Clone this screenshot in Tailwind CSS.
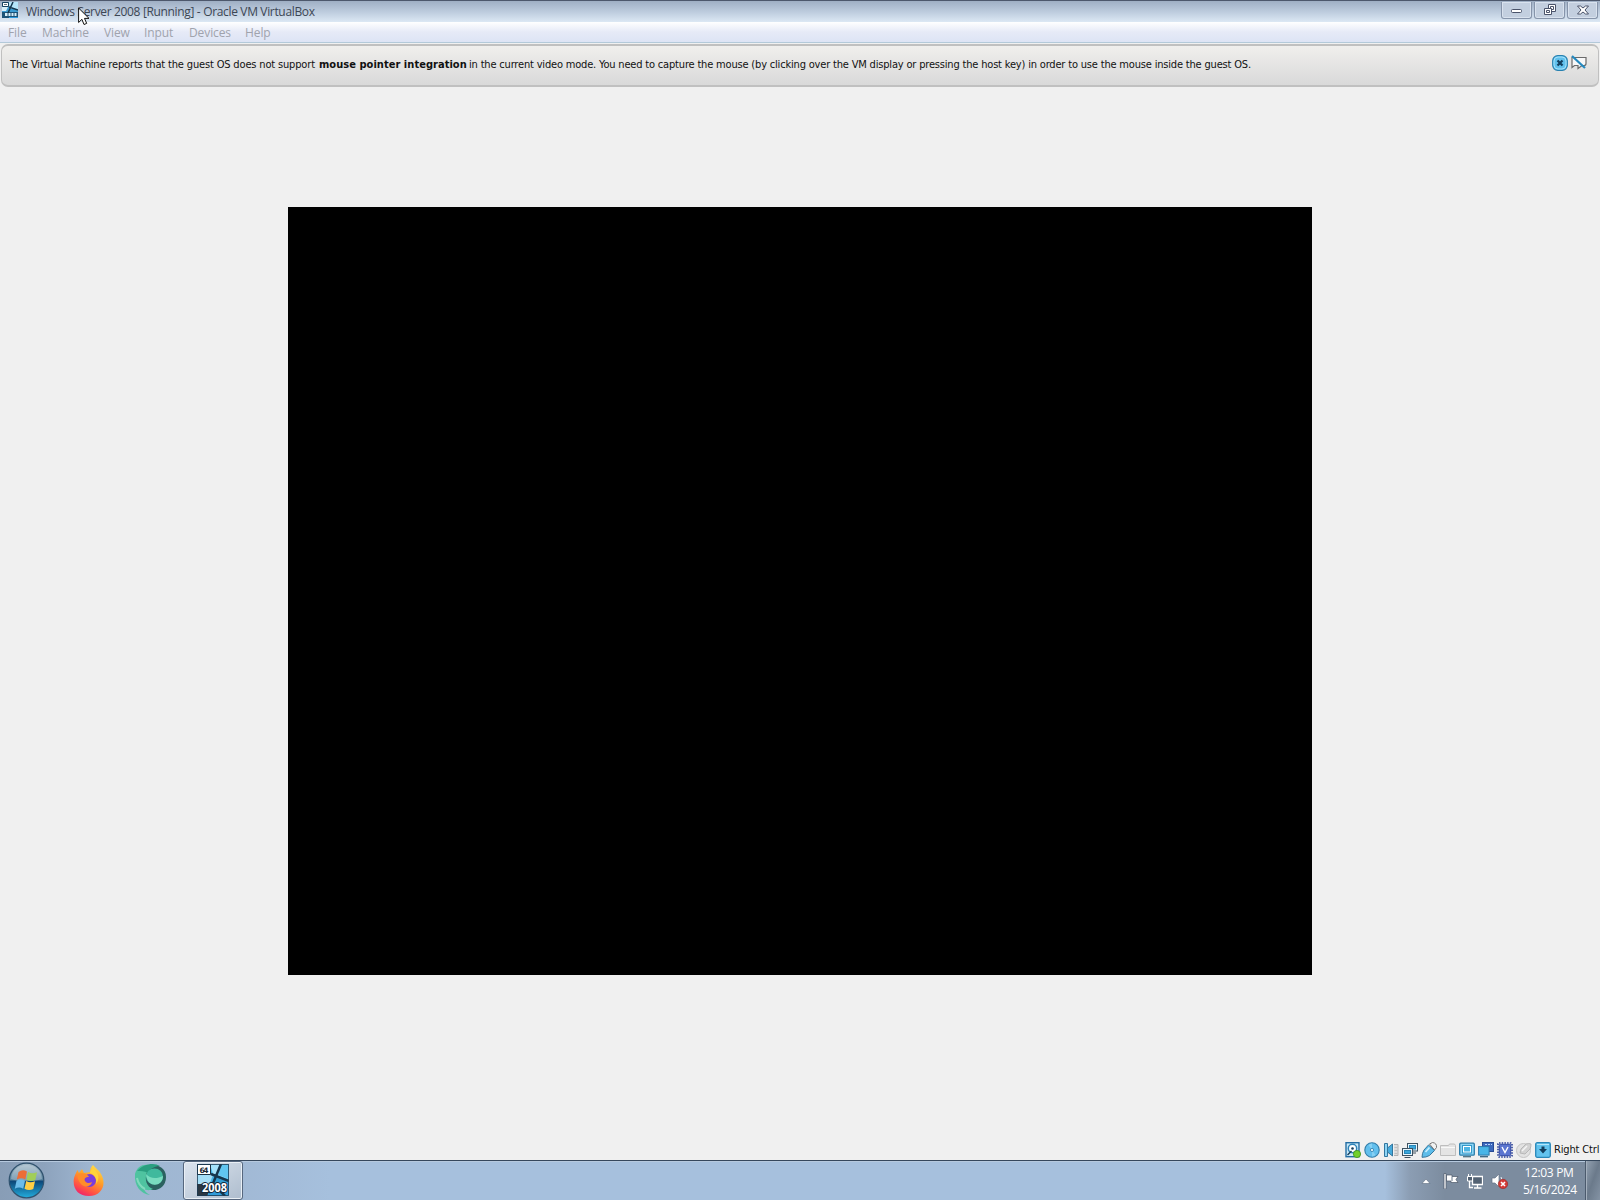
<!DOCTYPE html>
<html lang="en">
<head>
    <meta charset="UTF-8">
    <meta name="viewport" content="width=device-width, initial-scale=1.0">
    <title>Windows Server 2008 [Running] - Oracle VM VirtualBox</title>
    <script src="https://cdn.jsdelivr.net/npm/@tailwindcss/browser@4"></script>
</head>
<body class="bg-[#f0f0f0] overflow-hidden">
    <div class="relative flex h-[1200px] w-[1600px] flex-col overflow-hidden font-['Open_Sans','Noto_Sans',sans-serif]">

        <!-- Title bar -->
        <header class="flex h-[22px] shrink-0 items-start border-t border-[#4d586c] bg-linear-to-b from-[#9fafc4] via-[#bccbdd] to-[#dce8f4] pl-[2px] pr-[2px]">
            <svg class="mt-px h-4 w-4 shrink-0" viewBox="0 0 16 16">
                <rect width="16" height="16" fill="#3b9bd2"/>
                <path d="M7 0h9v8L7 6z" fill="#b5e6fa"/>
                <path d="M0 5h6l-2 4H0z" fill="#d7effa"/>
                <path d="M0 10h16v6H0z" fill="#1c5277"/>
                <path d="M11 0 6 11M7 5l9 3" stroke="#14354c" stroke-width="1.500"/>
                <path d="M.5.500h6v4h-6z" fill="#fff" stroke="#17415f"/>
                <path d="M2 2.500h3" stroke="#5d7280"/>
                <path d="M3 12.500h2.500m1 0h2m1 0h2m1 0h2" stroke="#d7eefa" stroke-width="3"/>
                <path d="M7 15.500h9" stroke="#2b9be0"/>
            </svg>
            <h1 class="ml-[8px] h-4 grow whitespace-nowrap pt-[2px] text-[12px] leading-[17px] tracking-[-0.34px] text-[#3c4654]">Windows Server 2008 [Running] - Oracle VM VirtualBox</h1>
            <div class="flex gap-[2px] pt-px">
                <button class="flex h-[17px] w-[31px] items-center justify-center rounded-b-[3px] border border-t-0 border-[#8694aa] bg-[#c3cfdf] shadow-[inset_0_0_0_1px_#d9e2ee]">
                    <svg class="h-[12px] w-[14px]" viewBox="0 0 14 12"><rect x="1.5" y="5.5" width="10" height="3" rx="1" fill="#fff" stroke="#4a536a"/></svg>
                </button>
                <button class="flex h-[17px] w-[31px] items-center justify-center rounded-b-[3px] border border-t-0 border-[#8694aa] bg-[#c3cfdf] shadow-[inset_0_0_0_1px_#d9e2ee]">
                    <svg class="h-[12px] w-[14px]" viewBox="0 0 14 12" fill="#fff" stroke="#4a536a"><path d="M5.500.5h7v7h-7z"/><path d="M7.500 2.500h3v3h-3z"/><path d="M1.500 4.500h7v6h-7z"/><path d="M3.500 6.500h3v2h-3z"/></svg>
                </button>
                <button class="flex h-[17px] w-[31px] items-center justify-center rounded-b-[3px] border border-t-0 border-[#8694aa] bg-[#c3cfdf] shadow-[inset_0_0_0_1px_#d9e2ee]">
                    <svg class="h-[12px] w-[14px]" viewBox="0 0 14 12"><path d="M1.500 2h3L7 4l2.500-2h3L9 6l3.500 4h-3L7 8l-2.500 2h-3L5 6z" fill="#fff" stroke="#4a536a"/></svg>
                </button>
            </div>
        </header>

        <!-- Menu bar -->
        <nav class="flex h-[21px] shrink-0 border-b border-[#b3c9d9] bg-linear-to-b from-white via-[#e6eaf7] to-[#dde4f5] pl-2 text-[12px] leading-[22px] tracking-[-0.1px] text-[#a0a3ad]">
            <span class="w-[34px]">File</span>
            <span class="w-[62px]">Machine</span>
            <span class="w-[40px]">View</span>
            <span class="w-[45px]">Input</span>
            <span class="w-[56px]">Devices</span>
            <span>Help</span>
        </nav>

        <!-- Message panel -->
        <section class="mx-px mt-px flex h-[43px] shrink-0 items-start rounded-[7px] border-x border-y-2 border-[#c0c0c0] bg-linear-to-b from-[#f0efed] to-[#d9d9d9] pl-[8px] pr-[11px] font-['DejaVu_Sans_Condensed','DejaVu_Sans',sans-serif]">
            <p class="flex grow whitespace-pre pt-[11px] text-[11px] leading-[16px] text-[#111]"><span class="w-[309px] tracking-[-0.16px]">The Virtual Machine reports that the guest OS does not support </span><b class="w-[150px] tracking-[0.04px]">mouse pointer integration</b><span class="tracking-[-0.18px]">in the current video mode. You need to capture the mouse (by clicking over the VM display or pressing the host key) in order to use the mouse inside the guest OS.</span></p>
            <div class="flex gap-[3px] pt-[9px]">
                <svg class="h-4 w-4" viewBox="0 0 16 16">
                    <rect x=".7" y=".7" width="14.600" height="14.600" rx="5" fill="#61c1ed" stroke="#2781b0" stroke-width="1.200"/>
                    <rect x="2" y="2" width="12" height="12" rx="4" fill="none" stroke="#a6e1fa"/>
                    <path d="m5.500 5.500 5 5m0-5-5 5" stroke="#123f5f" stroke-width="2.200"/>
                </svg>
                <svg class="h-4 w-4" viewBox="0 0 16 16">
                    <path d="M1 2.500h14v6q0 2-2 2h-2l-4 3v-3H3.500L1 12.500z" fill="#f8f8f8" stroke="#6b6b6b" stroke-width="1.200"/>
                    <path d="m1 1 13 12" stroke="#2489bf" stroke-width="2.200"/>
                </svg>
            </div>
        </section>

        <!-- Guest display -->
        <main class="flex h-[1051px] shrink-0 justify-center pt-[120px]">
            <div class="h-[768px] w-[1024px] bg-black"></div>
        </main>

        <!-- VM status bar -->
        <div class="flex h-[22px] shrink-0 items-center justify-end gap-[3px] pr-px pt-px">
            <svg class="h-4 w-4" viewBox="0 0 16 16">
                <rect x="1" y=".7" width="13" height="14" fill="#c9e9f8" stroke="#246da3" stroke-width="1.400"/>
                <circle cx="7.500" cy="6.500" r="4.200" fill="#fff" stroke="#2e83b8" stroke-width="1.500"/>
                <circle cx="7.500" cy="6.500" r="1.300" fill="#173e5c"/>
                <path d="m2.500 13 4-4" stroke="#173e5c" stroke-width="1.500"/>
                <circle cx="12" cy="12" r="3.600" fill="#72cf2b" stroke="#3f9319" stroke-width=".8"/>
            </svg>
            <svg class="h-4 w-4" viewBox="0 0 16 16">
                <circle cx="8" cy="8" r="7.200" fill="#62bfed" stroke="#317da9" stroke-width="1.100"/>
                <path d="M8 8 4.500 3A7 7 0 0 1 8 1.500zM8 8l3.500 5A7 7 0 0 1 8 14.500z" fill="#86d0f3"/>
                <circle cx="8" cy="8" r="1.600" fill="#e3f6ff" stroke="#317da9" stroke-width=".8"/>
            </svg>
            <svg class="h-4 w-4" viewBox="0 0 16 16">
                <path d="M1.500 1.500h3v13h-3z" fill="#8ed4f4" stroke="#32769e"/>
                <path d="M4.500 6 9.500 2v12l-5-4z" fill="#46abdc" stroke="#32769e"/>
                <path d="M11 2.500h4v11h-4" fill="#ddd" stroke="#b3b3b3"/>
                <path d="M11.500 5.500h3m-3 3h3m-3 3h3" stroke="#c0c0c0"/>
            </svg>
            <svg class="h-4 w-4" viewBox="0 0 16 16" stroke="#3f5261">
                <rect x="5.500" y="1.500" width="10" height="7.500" fill="#e8f6fd"/><rect x="7.500" y="3.500" width="6" height="3.500" fill="#3ba7dc" stroke="#2786b8"/>
                <path d="M8 11h6"/>
                <rect x=".5" y="6.500" width="10" height="7" fill="#e8f6fd"/><rect x="2.500" y="8.500" width="6" height="3" fill="#3ba7dc" stroke="#2786b8"/>
                <path d="M2.500 15.500h6"/>
            </svg>
            <svg class="h-4 w-4" viewBox="0 0 16 16">
                <path d="m8.500 2 3-1.500Q16 1 15.500 5.500l-2 2.500z" fill="#f2f2f2" stroke="#777"/>
                <path d="M7.500 3 13.500 8.500l-5 5Q5 15.500 1 15.300q0-4 2-7.300z" fill="#5dbdea" stroke="#36769b"/>
                <path d="m4.500 10 4-4.500" stroke="#c8effe" stroke-width="1.700"/>
            </svg>
            <svg class="h-4 w-4" viewBox="0 0 16 16"><path d="M.5 3.500h8l1-1.500h5l1 1.500v10H.5z" fill="#e4e4e4" stroke="#bebebe"/><path d="M1 5.500h14" stroke="#f8f8f8"/></svg>
            <svg class="h-4 w-4" viewBox="0 0 16 16">
                <rect x=".7" y="1.200" width="14.600" height="12" rx="1" fill="#8bd5f6" stroke="#2b7daa" stroke-width="1.300"/>
                <rect x="3.500" y="3.500" width="9" height="7.500" fill="#fff" stroke="#3499c9"/><path d="M5 5h6v4.500H5z" fill="#4db5e4"/>
                <path d="M4 14.700h8" stroke="#4f6f80" stroke-width="1.300"/>
            </svg>
            <svg class="h-4 w-4" viewBox="0 0 16 16">
                <rect x="4.500" y=".5" width="11" height="9" fill="#3c68bd" stroke="#294b95"/>
                <path d="M7 2.500h2m1 0h2m1 0h1" stroke="#b9d5fa"/>
                <rect x=".6" y="4.600" width="10.500" height="8.500" fill="#48b5e7" stroke="#2b79ab"/>
                <path d="M2 14.700h8" stroke="#36637f" stroke-width="1.300"/>
            </svg>
            <svg class="h-4 w-4" viewBox="0 0 16 16">
                <rect x="1" y="1" width="14" height="14" rx="1" fill="none" stroke="#293e96" stroke-width="1.600" stroke-dasharray="1.500 1.200"/>
                <rect x="2.300" y="2.300" width="11.400" height="11.400" rx="1" fill="#5b75d0" stroke="#334aa4"/>
                <path d="m5 5 3 5.500L11 5" fill="none" stroke="#fff" stroke-width="1.400"/>
            </svg>
            <svg class="h-4 w-4" viewBox="0 0 16 16">
                <circle cx="7.500" cy="8.500" r="7" fill="#e2e2e2" stroke="#c4c4c4"/>
                <path d="m4 11 1-4 5-5q3-1 5 0 0 3-1 5l-5 5z" fill="#d2d2d2" stroke="#b7b7b7"/><path d="m6 9 5-5" stroke="#f5f5f5" stroke-width="1.500"/>
            </svg>
            <svg class="h-4 w-4" viewBox="0 0 16 16">
                <rect x=".7" y=".7" width="14.600" height="14.600" rx="1.500" fill="#62c3ee" stroke="#2987b8" stroke-width="1.300"/>
                <path d="M2 2.500h12" stroke="#b3e6fb"/>
                <path d="M6.500 4.500h3V7H12l-4 4.500L4 7h2.500z" fill="#12405f"/>
            </svg>
            <span class="w-[45px] whitespace-nowrap pt-[2px] font-['DejaVu_Sans_Condensed','DejaVu_Sans',sans-serif] text-[11px] tracking-[-0.15px] text-[#111]">Right Ctrl</span>
        </div>

        <!-- Taskbar -->
        <footer class="flex h-[40px] shrink-0 items-stretch border-t border-[#35475c] bg-[linear-gradient(90deg,#889db6_0px,#8da3bd_45px,#9eb5d0_90px,#a1b9d5_240px,#a6c0dd_330px,#a6c0dd_1385px,#8b9db3_1410px,#7c8c9f_1445px,#7c8c9f_1600px)] shadow-[inset_0_1px_0_#b6c9de]">
            <div class="flex w-[183px] items-center">
                <svg class="ml-2 h-[37px] w-[37px]" viewBox="0 0 37 37">
                    <defs>
                        <linearGradient id="orb" x2="0" y2="1"><stop stop-color="#a9bdca"/><stop offset=".48" stop-color="#56809b"/><stop offset=".52" stop-color="#0c4678"/><stop offset="1" stop-color="#23aede"/></linearGradient>
                    </defs>
                    <circle cx="18.500" cy="18.500" r="17.300" fill="url(#orb)" stroke="#31536f" stroke-width="1.200"/>
                    <path d="M3 17C4 8 10 3 18.500 3S33 8 34 17c-8 3-23 3-31 0" fill="#e4f0f6" fill-opacity=".3"/>
                    <path d="M10.500 10q4-3 8.500-.5l-1.700 8q-4-2.500-8.500 0z" fill="#ec6d37"/>
                    <path d="M20 10q4 2.500 9 .2L27.300 18q-4.300 2.300-8.800-.2z" fill="#a1ce59"/>
                    <path d="M8.500 18.700q4-2.500 8.500 0l-1.800 8q-4-2.500-8.400 0z" fill="#6cbcea"/>
                    <path d="M18.200 19q4 2.500 8.800.2L25.300 27q-4.300 2.300-8.800-.2z" fill="#ffce44"/>
                </svg>
                <svg class="mb-px ml-[28px] h-[33px] w-[32px]" viewBox="0 0 32 33">
                    <defs>
                        <linearGradient id="fox" x1=".8" y1="0" x2=".3" y2="1"><stop stop-color="#ffe34b"/><stop offset=".45" stop-color="#ff9b28"/><stop offset=".8" stop-color="#ff4d48"/><stop offset="1" stop-color="#ed236e"/></linearGradient>
                    </defs>
                    <path d="M20 1c2 3 6 5 8 9 6 10 1 22-12 22C6 32 0 26 .7 16 1 12 3 9 4.500 6L6 9l3-4 2 4 6-1c0-3 1-5 3-7" fill="url(#fox)"/>
                    <circle cx="16.500" cy="16.500" r="6.500" fill="#7a3ddd"/>
                    <path d="M5 10c6-2 9 0 11 3-4 0-5 2-4 4 2 3 5 2 7 1-1 5-8 6-11 2-3-3-4-7-3-10" fill="#ff8c2b"/>
                    <path d="M17 9c5 2 7 6 6 11 4-5 3-11-3-16-2 2-3 3-3 5" fill="#ffd33d"/>
                </svg>
                <svg class="mb-px ml-[29px] h-[34px] w-[34px]" viewBox="0 0 34 34">
                    <path d="M8 5C15-1 32 1 32 14c0 12-12 16-20 11z" fill="#2b615f"/>
                    <path d="M1 11C3 4 8 1 15 2c-3 2-3 4-2 7-3 8 0 15 6 17-4 2-7 1-9 0 1 3 3 4 6 6C7 31 0 23 1 11" fill="#4fc3a0"/>
                    <path d="M3 8C9 1 20-1 26 3c-5 0-9 2-12 7-4-2-7-2-11-2" fill="#2a9f80"/>
                    <ellipse cx="20.500" cy="13.500" rx="8.500" ry="8" fill="#40b99d"/>
                    <path d="M12 11c4 5 11 5 17 2 0 11-16 13-17-2" fill="#79dcbf"/>
                    <path d="M3 15c1 5 4 9 8 11" fill="none" stroke="#a3ead0" stroke-opacity=".6" stroke-width="2"/>
                </svg>
            </div>
            <div class="flex w-[60px] items-center justify-center rounded-[3px] border border-[#56677e] bg-linear-to-br from-[#dce4ee] to-[#aebdce] shadow-[inset_0_0_0_1px_#e9eff5]">
                <svg class="mb-[2px] h-8 w-8" viewBox="0 0 32 32">
                    <rect width="32" height="32" fill="#46b5e7"/>
                    <path d="M13 0h19v15L16 10z" fill="#a5e3fb"/><path d="M24 0h8v15l-11-4z" fill="#61c6f1"/>
                    <path d="M0 11h16l-4 10H0z" fill="#a5def7"/>
                    <path d="M0 20h9l3 12H0z" fill="#2b3742"/><path d="M18 13l14 3v16H12z" fill="#319dd3"/><path d="M12 28h20v4H10z" fill="#309cda"/>
                    <path d="M24 0 12 29M14 10l18 7M16 20l12 12" stroke="#17374e" stroke-width="2.500"/>
                    <path d="M.5.500h13v10H.5z" fill="#fff" stroke="#1c3243"/>
                    <text x="2.500" y="8.500" font-family="DejaVu Sans" font-size="7.500" font-weight="bold" textLength="9" fill="#1b2934">64</text>
                    <text x="5" y="27.500" font-family="Open Sans" font-size="11.500" font-weight="bold" textLength="25" lengthAdjust="spacingAndGlyphs" fill="#fff" stroke="#14293a" stroke-width="2" paint-order="stroke">2008</text>
                    <rect x=".5" y=".5" width="31" height="31" fill="none" stroke="#1d3c54" stroke-width=".8"/>
                </svg>
            </div>
            <div class="grow"></div>

            <!-- Notification area -->
            <div class="flex items-center">
                <svg class="mr-[12px] mt-px h-[6px] w-[10px]" viewBox="0 0 10 6"><path d="M1 5.500 5 1l4 4.500z" fill="#fff" stroke="#5d6c80" stroke-width=".6"/></svg>
                <svg class="mr-[8px] h-4 w-4" viewBox="0 0 16 16"><path d="M1 .5h2V16H1zM3.500 2H9v1.500h6l-2 3 2 3H8V8H3.500z" fill="#fff" stroke="#4c5867" stroke-width=".7"/><path d="M9 3.500V8" stroke="#667789"/></svg>
                <svg class="mr-[8px] h-4 w-4" viewBox="0 0 16 16">
                    <path d="M5.500 3.500h10v8h-10z" fill="#536273" stroke="#fff" stroke-width="1.300"/>
                    <path d="M10.500 12v2.500M7 15h7.500M2.500 8v6.500H6" fill="none" stroke="#fff" stroke-width="1.300"/>
                    <path d="M.5 3.500h5V8h-5zM1.500 1v2.500M4.500 1v2.500" fill="#536273" stroke="#fff"/>
                </svg>
                <svg class="mr-[14px] h-4 w-[18px]" viewBox="0 0 18 16">
                    <path d="M1 5h3l4-4v13l-4-4H1z" fill="#fff" stroke="#667487" stroke-width=".7"/>
                    <path d="M10 4q2 3 0 6" fill="none" stroke="#eef2f6"/>
                    <circle cx="12" cy="11" r="4.700" fill="#d33a36" stroke="#992826" stroke-width=".6"/>
                    <path d="m10 9 4 4m0-4-4 4" stroke="#fff" stroke-width="1.600"/>
                </svg>
                <div class="mr-[10px] w-[52px] whitespace-nowrap pt-px text-center text-[12px] leading-[17px] tracking-[-0.35px] text-white">
                    <div>12:03 PM</div>
                    <div>5/16/2024</div>
                </div>
            </div>
            <div class="w-[15px] border-l border-[#4b5a6c] bg-linear-to-br from-[#94a2b2] via-[#6b7a8b] to-[#8493a4] shadow-[inset_1px_0_0_#a4b0bd]"></div>
        </footer>

        <!-- Mouse pointer -->
        <svg class="absolute left-[78px] top-[7px] h-[19px] w-[12px]" viewBox="0 0 12 19"><path d="M.6 1v14.500l3.300-3.200L6 17.500l2.700-1.100-2.200-5H11z" fill="#fff" stroke="#111"/></svg>
    </div>
</body>
</html>
